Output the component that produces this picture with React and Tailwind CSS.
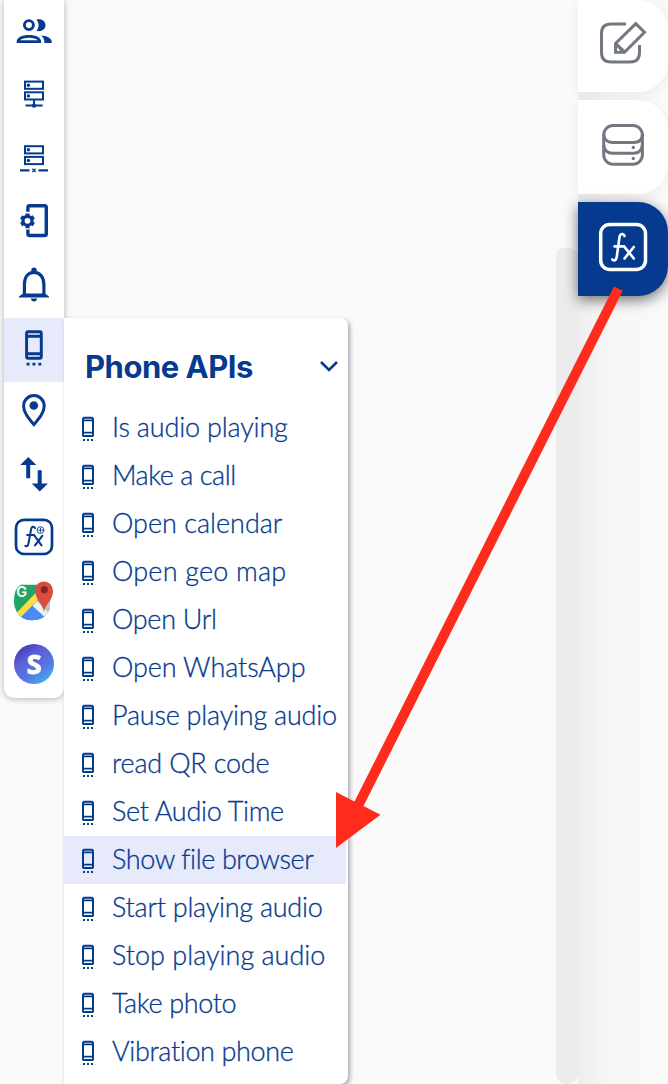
const NAVY = "#063a8e";

function PhoneShape() {
  return (
    <>
      <path d="M7 22h2v2H7zM11 22h2v2h-2zM15 22h2v2h-2z" />
      <path
        fillRule="evenodd"
        d="M8 0 H16 A2 2 0 0 1 18 2 V18 A2 2 0 0 1 16 20 H8 A2 2 0 0 1 6 18 V2 A2 2 0 0 1 8 0 Z M8 2 V3 H16 V2 Z M8 5 V15 H16 V5 Z M8 17 V18 H16 V17 Z"
      />
    </>
  );
}

function PhoneGlyph({ className }) {
  return (
    <svg viewBox="0 -0.4 24 24.800" className={className} fill="currentColor">
      <path d="M7 22.400h2v2H7zM11 22.400h2v2h-2zM15 22.400h2v2h-2z" />
      <path d="M7 3.800H17M7 16.200H17" stroke="currentColor" strokeWidth="1.700" />
      <rect x="7" y="1.200" width="10" height="18.400" rx="1.200" fill="none" stroke="currentColor" strokeWidth="2" />
    </svg>
  );
}

function People() {
  return (
    <g fill={NAVY}>
      <circle cx="28.900" cy="25.100" r="4.500" fill="none" stroke={NAVY} strokeWidth="2.900" />
      <path d="M36.500 19.800 C40.500 18.200 45.500 20.700 45.500 25.200 S40.500 32.200 36.500 30.700 C39.300 27.600 39.300 22.900 36.500 19.800Z" />
      <path fillRule="evenodd" d="M16.700 43 V41 C17.500 37 22.500 35 29 35 S40.300 37 41.100 41 V43Z M20 40.200 H37.900 C36.500 38.700 33 37.800 29 37.800 S21.500 38.700 20 40.200Z" />
      <path d="M41.200 35.600 C46.500 36 51 38 51.700 41.300 V43 H44.400 V41.200 C44.100 38.800 43 37 41.200 35.600Z" />
    </g>
  );
}

function Servers({ y, children }) {
  return (
    <g fill="none" stroke={NAVY} strokeWidth="2">
      <rect x="25" y={y + 1} width="18" height="7.200" />
      <rect x="25" y={y + 11.700} width="18" height="7.200" />
      <circle cx="28.400" cy={y + 4.600} r="1.700" fill={NAVY} stroke="none" />
      <circle cx="28.400" cy={y + 15.300} r="1.700" fill={NAVY} stroke="none" />
      {children}
    </g>
  );
}

function ServerOnline() {
  return (
    <Servers y={81}>
      <path d="M34 100.500V106M25.500 106H42.700" strokeWidth="2" />
      <circle cx="34" cy="106" r="2.200" fill={NAVY} stroke="none" />
    </Servers>
  );
}

function ServerOffline() {
  return (
    <Servers y={145}>
      <path d="M20 170.200H29.500M38.500 170.200H48" strokeWidth="2.200" />
      <path d="M32.300 168.500l3.400 3.400M35.700 168.500l-3.400 3.400" strokeWidth="1.300" />
    </Servers>
  );
}

function DeviceSettings() {
  return (
    <g fill="none" stroke={NAVY}>
      <path d="M27.900 212V207.800Q27.900 206 29.700 206H44.500Q46.300 206 46.300 207.800V233.900Q46.300 235.700 44.500 235.700H29.700Q27.900 235.700 27.900 233.900V229.800" strokeWidth="3.400" />
      <circle cx="27.500" cy="221" r="4.500" strokeWidth="3.200" />
      <path d="M27.500 213.600V216.500M27.500 225.500V228.400M21.100 217.300L23.600 218.750M31.400 223.250L33.900 224.700M21.100 224.700L23.600 223.250M31.400 218.750L33.900 217.300" strokeWidth="4" />
    </g>
  );
}

function Bell() {
  return (
    <g>
      <path d="M24.400 295.200V284.500C24.400 277 28 272 34 272S43.900 277 43.900 284.500V295.200" fill="none" stroke={NAVY} strokeWidth="3.200" />
      <path d="M31.300 271V269.700a2.700 2.700 0 0 1 5.400 0V271ZM19 297V296L23 293.200H45L49 296V297ZM30.800 298.200H37.200Q36.500 301.200 34 301.200T30.800 298.200Z" fill={NAVY} />
    </g>
  );
}

function Phone() {
  return (
    <g fill={NAVY} transform="translate(16.300 330.300) scale(1.470)">
      <PhoneShape />
    </g>
  );
}

function Pin() {
  return (
    <g>
      <path d="M33.900 425C28 418 23.600 412.500 23.600 406.300A10.300 10.300 0 0 1 44.200 406.300C44.200 412.500 39.800 418 33.900 425Z" fill="none" stroke={NAVY} strokeWidth="3" />
      <circle cx="33.800" cy="405.900" r="4.300" fill={NAVY} />
    </g>
  );
}

function Transfer() {
  return (
    <path
      fill={NAVY}
      d="M28.300 456.700L36.300 464.700H30.200V478H26.200V464.700H20.200ZM39.800 491.300L31.700 483.300H37.700V470H41.700V483.300H47.900Z"
    />
  );
}

function FunctionAdd() {
  return (
    <g fill="none" stroke={NAVY} strokeLinecap="round">
      <rect x="16" y="520" width="36" height="34.200" rx="8" strokeWidth="2.700" />
      <path d="M35 528.300C34 526 31.600 526.500 31.100 529.500L28.500 543.500C28 546.300 27 547 25.300 546" strokeWidth="2" />
      <path d="M27.200 535.200H34L41.500 545.500M42.300 536L35 545.500" strokeWidth="2.100" />
      <circle cx="40.500" cy="530.300" r="3.400" strokeWidth="0.900" />
      <path d="M38.500 530.300h4M40.500 528.300v4" strokeWidth="0.900" />
    </g>
  );
}

function MapLogo() {
  return (
    <g>
      <clipPath id="map-clip"><path d="M21 584H45Q50 584 50 590V608A19 19 0 0 1 17 612A20 20 0 0 1 14 600Q14 588 21 584Z" /></clipPath>
      <g clipPath="url(#map-clip)">
        <rect x="13" y="582" width="40" height="40" fill="#21a464" />
        <path d="M17 616L34 599L52 617V624H17Z" fill="#4a8af4" />
        <path d="M14 615L39 589L42 595L19 619Z" fill="#fedc48" />
        <path d="M37 601L45 590L54 590V616Z" fill="#c3c3c3" />
        <path d="M32.500 605.500L37 600.500L51 614L48 619.500Z" fill="#f0f0f0" />
        <path d="M21.500 616L32.500 605.500L47 620V624H21.500Z" fill="#4a8af4" />
      </g>
      <text x="16.300" y="597" fontSize="14.500" fontWeight="600" fill="#f5fff8" className="font-['Inter',sans-serif]">G</text>
      <path d="M44 611.500C43 603.500 35.500 600 35.300 590.500C35.300 584.500 39 581 43.500 581S53 584 53 591C53 600 45.200 603 44 611.500Z" fill="#dc4b3f" />
      <circle cx="44.300" cy="589.300" r="3.600" fill="#802724" />
    </g>
  );
}

function SLogo() {
  return (
    <g>
      <defs>
        <linearGradient id="s-fill" x1="0.200" y1="0" x2="0.850" y2="1">
          <stop offset="0" stopColor="#4036ae" />
          <stop offset="0.300" stopColor="#5a5fd6" />
          <stop offset="0.650" stopColor="#5578e2" />
          <stop offset="1" stopColor="#43b7f8" />
        </linearGradient>
      </defs>
      <circle cx="34" cy="664" r="20" fill="url(#s-fill)" />
      <text x="34" y="674.200" textAnchor="middle" fontSize="26.500" fontWeight="700" fill="#fff" stroke="#fff" strokeWidth="1" className="font-['Noto_Sans',sans-serif] not-italic">S</text>
    </g>
  );
}

const tools = [People, ServerOnline, ServerOffline, DeviceSettings, Bell, Phone, Pin, Transfer, FunctionAdd, MapLogo, SLogo];

const actions = [
  ["Is audio playing", "tracking-[-0.17px]"],
  ["Make a call", "tracking-[-0.45px]"],
  ["Open calendar", "tracking-[0px]"],
  ["Open geo map", "tracking-[0.2px]"],
  ["Open Url", "tracking-[-0.3px]"],
  ["Open WhatsApp", "tracking-[-0.1px]"],
  ["Pause playing audio", "tracking-[-0.22px]"],
  ["read QR code", "tracking-[-0.2px]"],
  ["Set Audio Time", "tracking-[-0.3px]"],
  ["Show file browser", "tracking-[-0.4px]"],
  ["Start playing audio", "tracking-[-0.25px]"],
  ["Stop playing audio", "tracking-[0px]"],
  ["Take photo", "tracking-[-0.35px]"],
  ["Vibration phone", "tracking-[-0.37px]"],
];

function Toolbar() {
  return (
    <nav className="ml-1 h-[698px] w-[60px] shrink-0 rounded-b-[10px] bg-white pt-px shadow-[0_1px_6px_rgba(40,40,70,0.35)]">
      {tools.map((Tool, i) => (
        <div key={i} className={i === 5 ? "h-[63.4px] bg-[#e7eafb] shadow-[0_1px_0_#e7eafb]" : "h-[63.4px]"}>
          <svg viewBox={`4 ${1 + 63.4 * i} 60 63.4`} className="block h-full w-full">
            <Tool />
          </svg>
        </div>
      ))}
    </nav>
  );
}

function ApiPanel() {
  return (
    <section className="mt-[318px] h-[766px] w-[284px] shrink-0 rounded-r-[8px] bg-white text-[#063a8e] shadow-[2px_2px_4px_rgba(40,40,70,0.4)]">
      <header className="flex h-[86px] items-center justify-between pt-[10px] pr-[9px] pl-[21px]">
        <h1 className="font-['Inter',sans-serif] text-[31px] leading-none font-bold tracking-[-0.5px] whitespace-nowrap">Phone APIs</h1>
        <svg viewBox="0 0 20 12" className="h-3 w-5 shrink-0" fill="none" stroke="currentColor" strokeWidth="2.6">
          <path d="M2 2L10 10L18 2" />
        </svg>
      </header>
      <ul>
        {actions.map(([label, tracking], i) => (
          <li key={label} className={i === 9 ? "mr-[2px] flex h-12 items-center gap-3 bg-[#e7eafb] pl-3" : "mr-[2px] flex h-12 items-center gap-3 pl-3"}>
            <PhoneGlyph className="h-[25px] w-6 shrink-0" />
            <span className={`pb-[3px] font-['Lato',sans-serif] text-[27px] leading-[45px] font-light whitespace-nowrap [-webkit-text-stroke:0.3px_#063a8e] ${tracking}`}>{label}</span>
          </li>
        ))}
      </ul>
    </section>
  );
}

function SideTabs() {
  return (
    <aside className="ml-auto flex h-[1084px] w-[112px] shrink-0">
      <div className="mt-[248px] h-[836px] w-[22px] rounded-t-[8px] rounded-b-[10px] bg-[#ececec]" />
      <div className="flex w-[90px] flex-col gap-2 bg-linear-to-r from-[#eeeeee] via-[#f6f6f6] via-30% to-[#fafafa]">
        <div className="flex h-[92px] rounded-r-[30px] bg-white shadow-[0_2px_14px_rgba(0,0,0,0.06)]">
          <svg viewBox="578 0 90 92" className="h-full w-full" fill="none" stroke="#737780" strokeWidth="3">
            <path d="M626 24H611Q601.500 24 601.500 33.500V52.500Q601.500 62 611 62H630Q639.500 62 639.500 52.500V45" />
            <path d="M615.500 43.500L635.800 23.600L644.500 32.200L624.500 52.300H615.500Z" />
            <path d="M615.500 43.500L624.500 52.300" strokeWidth="3.400" />
          </svg>
        </div>
        <div className="flex h-[94px] rounded-r-[30px] bg-white shadow-[0_2px_14px_rgba(0,0,0,0.06)]">
          <svg viewBox="578 100 90 94" className="h-full w-full" fill="none" stroke="#737780" strokeWidth="3">
            <rect x="603.700" y="125.500" width="38.700" height="38.800" rx="9.500" />
            <path d="M603.700 134Q604 142.500 612.500 142.500H633.500Q642.400 142.500 642.400 134M603.700 145Q604.500 153.300 612.500 153.300H633.500Q641.600 153.300 642.400 145" />
            <circle cx="633.300" cy="147.500" r="1.700" fill="#737780" stroke="none" />
            <circle cx="633.300" cy="158.500" r="1.700" fill="#737780" stroke="none" />
          </svg>
        </div>
        <div className="flex h-[94px] rounded-r-[30px] bg-[#063a8e] shadow-[0_4px_14px_rgba(0,0,0,0.55)]">
          <svg viewBox="578 202 90 94" className="h-full w-full" fill="none" stroke="#fff" strokeLinecap="round">
            <rect x="600.700" y="224.500" width="44.800" height="45" rx="9" strokeWidth="3.500" />
            <path d="M624.500 236C623.500 233 620.200 233.300 619.500 237L616.800 256.500C616.300 260.300 614.200 261.300 612.300 259.500" strokeWidth="2.600" />
            <path d="M614.500 246.400H624L633.800 258.500M633.800 247L624.500 258.500" strokeWidth="2.600" />
          </svg>
        </div>
      </div>
    </aside>
  );
}

export default function App() {
  return (
    <main className="relative flex h-[1084px] w-[668px] items-start overflow-hidden bg-[#fafafa]">
      <Toolbar />
      <ApiPanel />
      <SideTabs />
      <svg viewBox="0 0 668 1084" className="pointer-events-none absolute inset-0 h-full w-full" fill="#ff2b1d">
        <path d="M614 286.500L622.800 290.800L363.500 806L380.500 814.700L336 848V792L354.500 801.500Z" />
      </svg>
    </main>
  );
}
